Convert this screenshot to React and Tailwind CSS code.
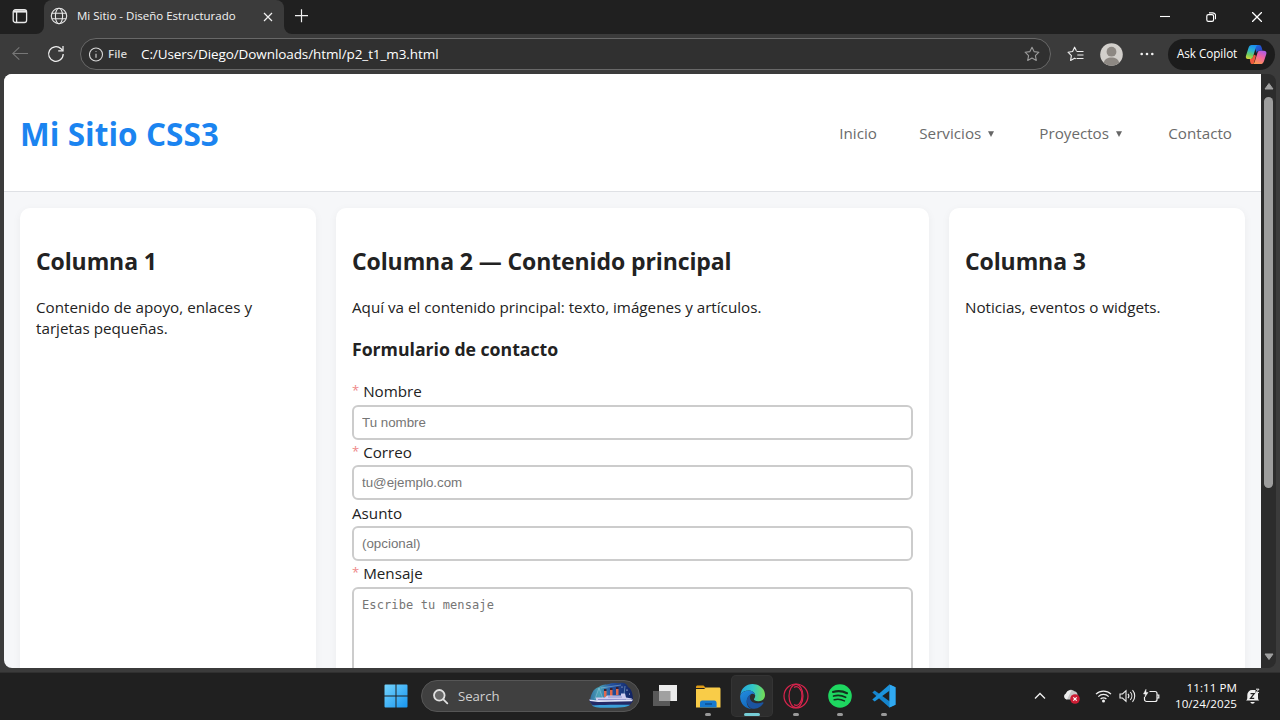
import React from "react";

const UI = "font-['Open_Sans','Noto_Sans',sans-serif]";

function Svg({ w, h, vb, className = "", children, ...rest }) {
  return (
    <svg width={w} height={h} viewBox={vb || `0 0 ${w} ${h}`} fill="none" className={`block shrink-0 ${className}`} {...rest}>
      {children}
    </svg>
  );
}

function TabStrip() {
  return (
    <div className="flex h-[34px] bg-[#202020] text-[#f2f2f2]">
      <div className="w-[44px] pt-2 pl-3">
        <Svg w={16} h={16} stroke="#e8e8e8" strokeWidth="1.3">
          <rect x="1.2" y="1.7" width="13.4" height="12.8" rx="2.3" />
          <path d="M1.5 3.4h12.800" strokeWidth="2.4" />
          <path d="M4.600 4v10" />
        </Svg>
      </div>
      <div className="relative flex h-[34px] w-[240px] items-center rounded-t-lg bg-[#3b3b3b]">
        <Svg w={8} h={8} className="absolute bottom-0 -left-2"><path d="M8 0v8H0a8 8 0 0 0 8-8Z" fill="#3b3b3b" /></Svg>
        <Svg w={8} h={8} className="absolute -right-2 bottom-0"><path d="M0 0v8h8a8 8 0 0 1-8-8Z" fill="#3b3b3b" /></Svg>
        <Svg w={18} h={18} className="mb-0.5 ml-[6px]" stroke="#e6e6e6" strokeWidth="1.1">
          <circle cx="9" cy="9" r="7.7" />
          <ellipse cx="9" cy="9" rx="3.6" ry="7.7" />
          <path d="M2 6.2h14M2 11.8h14" />
        </Svg>
        <span className="ml-[9px] w-[180px] pb-[2px] text-[11.5px] leading-4 whitespace-nowrap">Mi Sitio - Diseño Estructurado</span>
        <Svg w={10} h={10} className="mb-px ml-[6px]" stroke="#f0f0f0" strokeWidth="1.2"><path d="m1 1 8 8M9 1 1 9" /></Svg>
      </div>
      <Svg w={16} h={16} className="mt-2 ml-[9px]" stroke="#f0f0f0" strokeWidth="1.2"><path d="M8.5 1.2v13M2 7.7h13" /></Svg>
      <div className="ml-auto flex h-[34px] items-center gap-9 pr-[18px]">
        <Svg w={10} h={10} stroke="#fff" strokeWidth="1.1"><path d="M0 4.5h10" /></Svg>
        <Svg w={10} h={10} stroke="#fff" strokeWidth="1.2">
          <rect x=".8" y="2.6" width="6.8" height="6.8" rx="1.6" />
          <path d="M3 .8h3.600a3 3 0 0 1 3 3v3.400" />
        </Svg>
        <Svg w={10} h={10} stroke="#fff" strokeWidth="1.3"><path d="m0 0 10 10M10 0 0 10" /></Svg>
      </div>
    </div>
  );
}

const STAR = "m8 1.2 2.1 4.4 4.8.6-3.5 3.4.9 4.8L8 12.1l-4.3 2.3.9-4.8L1.1 6.2l4.8-.6Z";

function Toolbar() {
  return (
    <div className="flex h-10 items-center bg-[#3b3b3b] text-white">
      <Svg w={16} h={16} className="ml-3" stroke="#777" strokeWidth="1.1"><path d="M16 7.500H.8M7.300 1.300.7 7.500l6.600 6.200" /></Svg>
      <Svg w={18} h={18} className="ml-[19px]" stroke="#f0f0f0" strokeWidth="1.25">
        <path d="M16.200 9A7.300 7.300 0 1 1 14 3.800l1.600 1.600" />
        <path d="M16 1v4.800h-4.800" />
      </Svg>
      <div className="ml-[15px] flex h-8 w-[971px] items-center rounded-full border border-[#686868] bg-[#303030] pr-[10px] pl-2">
        <Svg w={15} h={15} stroke="#d8d8d8" strokeWidth="1.1">
          <circle cx="7" cy="7.500" r="6.500" />
          <path d="M7 6.700v4" />
          <circle cx="7" cy="4.600" r=".5" fill="#d8d8d8" stroke="none" />
        </Svg>
        <span className="ml-1 w-[33px] text-[11.500px] font-semibold text-[#d6d6d6]">File</span>
        <span className="text-[13.500px] tracking-[-0.090px] whitespace-nowrap">C:/Users/Diego/Downloads/html/p2_t1_m3.html</span>
        <Svg w={16} h={16} className="ml-auto" stroke="#9b9b9b" strokeWidth="1.1"><path d={STAR} strokeLinejoin="round" /></Svg>
      </div>
      <Svg w={18} h={16} className="ml-4" stroke="#eee" strokeWidth="1.150" strokeLinejoin="round">
        <path d="M9.400 4.800 7.600 1.200 5.600 5.500l-4.600.7 3.400 3.400-.8 4.800 4-2.200 1.200.6M9.500 5.500h7M10.300 9h6.200M9.500 12.500h7" />
      </Svg>
      <Svg w={23} h={23} className="ml-[15px]">
        <circle cx="11.500" cy="11.500" r="11.300" fill="#d2cfcb" />
        <circle cx="11.500" cy="8.700" r="4.900" fill="#8d8883" />
        <path d="M3.800 19.800c.8-4 3.800-5.400 7.700-5.400s6.900 1.400 7.700 5.400a11.300 11.300 0 0 1-15.400 0Z" fill="#8d8883" />
      </Svg>
      <Svg w={14} h={4} className="ml-[17px]"><g fill="#f2f2f2"><circle cx="1.700" cy="2" r="1.300" /><circle cx="7" cy="2" r="1.300" /><circle cx="12.300" cy="2" r="1.300" /></g></Svg>
      <div className="ml-[14px] flex h-[31px] w-[107px] items-center rounded-full bg-[#1c1c1c] pl-[9px]">
        <span className="w-[68px] text-[11.700px] tracking-[-0.050px] whitespace-nowrap">Ask Copilot</span>
        <CopilotIcon />
      </div>
    </div>
  );
}

function CopilotIcon() {
  return (
    <Svg w={23} h={21} vb="0 0 24 22">
      <defs>
        <linearGradient id="cpA" x1="8" y1="1" x2="3" y2="17" gradientUnits="userSpaceOnUse">
          <stop stopColor="#1b8df0" /><stop offset=".35" stopColor="#2cb5d2" /><stop offset=".65" stopColor="#6fce62" /><stop offset="1" stopColor="#f6d52b" />
        </linearGradient>
        <linearGradient id="cpB" x1="19" y1="6" x2="12" y2="21" gradientUnits="userSpaceOnUse">
          <stop stopColor="#a35bf0" /><stop offset=".45" stopColor="#ef62a4" /><stop offset="1" stopColor="#ff9a4c" />
        </linearGradient>
        <linearGradient id="cpC" x1="10" y1="1" x2="17" y2="8" gradientUnits="userSpaceOnUse">
          <stop stopColor="#1b6fe0" /><stop offset="1" stopColor="#2a43c5" />
        </linearGradient>
      </defs>
      <path d="M9.500 1h5c2 0 2.500 1.300 3 3l.9 3H15c-1.800 0-2.400.9-2.900 2.400L11 6Z" fill="url(#cpC)" />
      <path d="M7 1h6.500c-1.500.5-2 1.800-2.500 3.500L8.300 13.600c-.5 1.400-1.300 2.200-2.800 2.200H3c-2 0-2.600-1.500-2-3.400l2.500-8C4.200 2.200 5.300 1 7 1Z" fill="url(#cpA)" />
      <path d="M5 15.800c2 0 2.800-.8 3.300-2.200l.8-2.600 2.300 1.400-1.700 6.200c-.3 1.500-1 2.400-2.400 2.400-1.300 0-1.900-1-2.300-5.200Z" fill="#f0573c" />
      <path d="M15.600 7h4c2.300 0 3.300 1.500 2.700 3.600l-2.500 7.400c-.7 2-1.900 3-3.700 3H7.500c1.500-.3 2.300-1.300 2.700-2.700l2.800-9C13.400 7.900 14.200 7 15.600 7Z" fill="url(#cpB)" />
    </Svg>
  );
}

function Field({ label, required, placeholder }) {
  return (
    <div className="h-[60.670px]">
      <Label text={label} required={required} />
      <input placeholder={placeholder} className="block h-[35px] w-full rounded-[6px] border-2 border-[#ccc] bg-white px-2 font-['Liberation_Sans',sans-serif] text-[13.333px] placeholder:text-[#757575]" />
    </div>
  );
}

function Label({ text, required }) {
  return (
    <label className="flex h-[25.500px] items-start text-[15.200px] leading-[24px]">
      {required && <span className="mr-1 -mt-px text-[13px] text-[#ee8888]">*</span>}
      <span>{text}</span>
    </label>
  );
}

function Column({ title, className, children }) {
  return (
    <section className={`h-[600px] shrink-0 rounded-[10px] bg-white px-4 pt-9 shadow-[0_2px_8px_rgba(0,0,0,0.05)] ${className}`}>
      <h2 className="mb-[21px] h-8 text-[23px] leading-[34px] font-bold tracking-[-0.100px] whitespace-nowrap">{title}</h2>
      {children}
    </section>
  );
}

function Page() {
  return (
    <div className="h-[594px] w-[1257px] overflow-hidden rounded-l-lg bg-[#f6f7f9] text-[#222]">
      <header className="flex h-[118px] items-center justify-between border-b border-[#dfe1e5] bg-white pt-[2px] pr-[29px] pl-4">
        <h1 className="text-[31.500px] leading-10 font-bold tracking-[0.050px] text-[#1b84f0]">Mi Sitio CSS3</h1>
        <nav className="flex items-center text-[15.200px] text-[#6b6b6b]">
          <a className="w-[80px]">Inicio</a>
          <a className="flex w-[120px] items-center">Servicios<Caret /></a>
          <a className="flex w-[129px] items-center">Proyectos<Caret /></a>
          <a>Contacto</a>
        </nav>
      </header>
      <main className="flex gap-5 px-4 pt-4">
        <Column title="Columna 1" className="w-[296px]">
          <p className="text-[15.200px] leading-[21.330px] tracking-[0.020px]">Contenido de apoyo, enlaces y<br />tarjetas pequeñas.</p>
        </Column>
        <Column title="Columna 2 — Contenido principal" className="w-[593px]">
          <p className="text-[15.200px] leading-[21.330px] whitespace-nowrap">Aquí va el contenido principal: texto, imágenes y artículos.</p>
          <h3 className="mt-[19px] mb-[18px] h-6 text-[17.700px] leading-6 font-bold tracking-[-0.030px]">Formulario de contacto</h3>
          <form>
            <Field label="Nombre" required placeholder="Tu nombre" />
            <Field label="Correo" required placeholder="tu@ejemplo.com" />
            <Field label="Asunto" placeholder="(opcional)" />
            <Label text="Mensaje" required />
            <textarea placeholder="Escribe tu mensaje" className="block h-[120px] w-full resize-none rounded-[6px] border-2 border-[#ccc] bg-white px-2 pt-[9px] font-['DejaVu_Sans_Mono',monospace] text-[12px] leading-[15px] tracking-[0.110px] placeholder:text-[#757575]" />
          </form>
        </Column>
        <Column title="Columna 3" className="w-[296px]">
          <p className="text-[15.200px] leading-[21.330px]">Noticias, eventos o widgets.</p>
        </Column>
      </main>
    </div>
  );
}

function Caret() {
  return <Svg w={6} h={6} className="mt-px ml-[7px]"><path d="M0 .3h6L3 6Z" fill="#666" /></Svg>;
}

function Scrollbar() {
  return (
    <div className="flex h-[594px] w-[15px] flex-col items-center rounded-r-lg bg-[#2c2c2c] pt-2">
      <Svg w={10} h={8}><path d="M5 1.500 9 7H1Z" fill="#a0a0a0" stroke="#a0a0a0" strokeLinejoin="round" /></Svg>
      <div className="mt-[7px] h-[391px] w-[9px] rounded-full bg-[#9d9d9d]" />
      <Svg w={10} h={8} className="mt-auto mb-[7px]"><path d="M5 6.500 9 1H1Z" fill="#a0a0a0" stroke="#a0a0a0" strokeLinejoin="round" /></Svg>
    </div>
  );
}

function TaskButton({ children, state }) {
  return (
    <div className={`relative flex h-10 w-10 items-center justify-center rounded ${state === "active" ? "bg-[#2d2d2d] ring-1 ring-[#343434]" : ""}`}>
      {children}
      {state && <span className={`absolute bottom-0 h-[3px] rounded-full ${state === "active" ? "w-4 bg-[#76cdd6]" : "w-[6px] bg-[#999]"}`} />}
    </div>
  );
}

function ShipArt() {
  return (
    <Svg w={48} h={28}>
      <defs>
        <linearGradient id="night" x1="0" y1="0" x2="48" y2="0" gradientUnits="userSpaceOnUse"><stop stopColor="#2c5f9c" /><stop offset=".25" stopColor="#4ba5b8" /><stop offset=".5" stopColor="#2452a0" /><stop offset="1" stopColor="#101d5c" /></linearGradient>
      </defs>
      <path d="M3 20C3 14 6 6 12 5c3-3 7-2 10-3 4-2 8 0 11-1 4-1 7 1 8 4 4 2 5 8 5 14l-4 5H6Z" fill="url(#night)" />
      <path d="m8 17 4-11 4 11M37 13l1-9M14 6l20-3" stroke="#9cc9df" strokeWidth=".5" />
      <path d="M17 9h2.500v6H17zM23 8h2.500v6H23zM29 7h2.500v6H29z" fill="#e0684c" />
      <path d="M17 7h2.500v2H17zM23 6h2.500v2H23zM29 5h2.500v2H29z" fill="#3a2030" />
      <path d="M9 15.500h9l2-2h14v-2h4l1 4 6 1-2 3H9Z" fill="#cfcdf0" />
      <path d="M11 17.500h28M21 15h14" stroke="#7d82c4" strokeWidth=".8" />
      <path d="m2 17.500 9 1.500 35-1.500c-1 3-3 5.500-5 6.500H7c-2-1-4-3.500-5-6.500Z" fill="#232a66" />
      <path d="m2 17.500 9 1 35-1-1 1.800-34 .8-8-1.200Z" fill="#e2e6f8" />
      <path d="M5 23.500c8-.7 28-.7 38-.7-2 2-6 3-19 3-12 0-16 0-19-2.300Z" fill="#3a9fd8" />
      <circle cx="40" cy="8" r=".6" fill="#fff" /><circle cx="42.500" cy="12" r=".5" fill="#fff" /><circle cx="35" cy="5" r=".5" fill="#fff" />
    </Svg>
  );
}

function Taskbar() {
  return (
    <div className="flex h-[48px] items-center justify-between border-t border-[#303030] bg-[#202020] text-white">
      <div className="flex h-[47px] items-center pb-px pl-[384px]">
        <Svg w={24} h={24}>
          <defs><linearGradient id="win" x1="0" y1="0" x2="24" y2="24" gradientUnits="userSpaceOnUse"><stop stopColor="#76d5fd" /><stop offset="1" stopColor="#1594f0" /></linearGradient></defs>
          <path d="M1.500.5h10v11H.5v-10a1 1 0 0 1 1-1ZM12.500.5h10a1 1 0 0 1 1 1v10h-11ZM.5 12.500h11v11h-10a1 1 0 0 1-1-1ZM12.500 12.500h11v10a1 1 0 0 1-1 1h-10Z" fill="url(#win)" />
        </Svg>
        <div className="ml-[13px] flex h-8 w-[219px] items-center rounded-full border border-[#565656] bg-[#404040] pr-[4px] pl-[10px]">
          <Svg w={17} h={17} stroke="#e0e0e0" strokeWidth="1.800" strokeLinecap="round"><circle cx="7.300" cy="7.300" r="5.300" fill="#686868" /><path d="m11.300 11.300 4 4" /></Svg>
          <span className="ml-[9px] pt-px text-[13.200px] tracking-[-0.050px] text-[#d0d0d0]">Search</span>
          <div className="ml-auto"><ShipArt /></div>
        </div>
        <div className="ml-1 flex gap-1">
          <TaskButton>
            <Svg w={24} h={24} className="ml-px"><path d="M0 7h17v15H0z" fill="#595959" /><path d="M6 1h18v16H6z" fill="#ececec" /><path d="M6 7h11.500v10H6z" fill="#a1a1a1" /></Svg>
          </TaskButton>
          <TaskButton state="open">
            <Svg w={25} h={23}>
              <path d="M0 2C0 1 .7.5 1.500.5h6L10 3H0Z" fill="#df9b16" />
              <path d="M0 4h8l2-1.500h13c1 0 1.500.6 1.500 1.500v18.500H0Z" fill="#f9cc48" />
              <path d="M4 22.500V18c0-1.500.8-2.500 2.300-2.500h12c1.500 0 2.300 1 2.300 2.500v4.500Z" fill="#1679cf" />
              <path d="M9 19h7" stroke="#0d4e91" strokeWidth="1.500" />
            </Svg>
          </TaskButton>
          <TaskButton state="active">
            <Svg w={25} h={25} vb="0 0 24 24">
              <defs>
                <linearGradient id="eA" x1="1" y1="7" x2="23" y2="9" gradientUnits="userSpaceOnUse"><stop stopColor="#26a7dc" /><stop offset=".5" stopColor="#31c6c8" /><stop offset="1" stopColor="#70dc5b" /></linearGradient>
                <linearGradient id="eB" x1="2" y1="8" x2="10" y2="23" gradientUnits="userSpaceOnUse"><stop stopColor="#2089dc" /><stop offset="1" stopColor="#1265b8" /></linearGradient>
              </defs>
              <path d="M.4 10.300C1.200 4.200 6 0 12 0c7 0 12 5 12 10.500 0 3.600-2.700 6-6.300 6-3 0-4.300-1-4.300-1.800 0-.7 1.200-1.300 1.200-3.400 0-2.800-2.700-5-6.300-5C5 6.300 2 7.500.4 10.300Z" fill="url(#eA)" />
              <path d="M8.500 6.300C4.500 6.300.2 8.500.1 12c0 7 5 12 11.500 12-3.500-1-5.500-4.500-5.100-8 .4-3 2-4.800 4.400-6.300 1.400-.8 3.500 0 3.700 1.600C14.300 8.200 11.500 6.300 8.500 6.300Z" fill="url(#eB)" />
              <path d="M10.900 9.700c-2.300.8-4.400 3.400-4.400 6.300 0 4.300 3.400 8 7.500 7.800 3.700-.4 6.900-2.600 8.500-5.400.4-.7-.3-1-.8-.8-5 2.200-12.100.5-12.200-5 0-1.100.5-2.100 1.400-2.900Z" fill="#1b54a0" />
            </Svg>
          </TaskButton>
          <TaskButton state="open">
            <Svg w={26} h={26} stroke="#d9244d" strokeWidth="1.200"><circle cx="13" cy="13" r="12" /><ellipse cx="13" cy="13" rx="7" ry="11.700" /><path d="M11 4.500c3.500-2.500 8 1.500 8 8.500s-4.500 11-8 8.500" /></Svg>
          </TaskButton>
          <TaskButton state="open">
            <Svg w={24} h={24} stroke="#14301d" strokeLinecap="round">
              <circle cx="12" cy="12" r="11.800" fill="#1ed760" stroke="none" />
              <path d="M5 8c4.500-1.400 9.800-1 14 1.200" strokeWidth="2.100" /><path d="M5.600 12c4-1.200 8.300-.7 12 1.200" strokeWidth="1.800" /><path d="M6.200 15.700c3.500-.9 7-.5 10.200 1.200" strokeWidth="1.500" />
            </Svg>
          </TaskButton>
          <TaskButton state="open">
            <Svg w={24} h={24}>
              <path d="m17.500.5 6 2.700v17.600l-6 2.700L.3 8.500l2.400-2 14.800 10.800Z" fill="#1584cc" />
              <path d="M17.500 6.700 2.700 17.500.3 15.500 17.500.5Z" fill="#1b93dc" />
              <path d="m17.500.5 6 2.700v17.600l-6 2.700Z" fill="#30a9f1" />
            </Svg>
          </TaskButton>
        </div>
      </div>
      <div className="flex h-[47px] items-center pr-[19px] pb-px">
        <Svg w={12} h={8} stroke="#f0f0f0" strokeWidth="1.300"><path d="m1 6.500 5-5 5 5" /></Svg>
        <Svg w={17} h={16} className="ml-[17px]">
          <path d="M3.500 11.500A3.200 3.200 0 0 1 3 5.500a5 5 0 0 1 8.500-2.200 4 4 0 0 1 3 4.200v4Z" fill="#c9c9c9" />
          <path d="M3 5.500a5 5 0 0 1 5.500-3L4 11.500A3.200 3.200 0 0 1 3 5.500Z" fill="#eee" />
          <circle cx="12" cy="11" r="4.800" fill="#cc1e35" /><path d="m10.300 9.300 3.400 3.400M13.700 9.300l-3.400 3.400" stroke="#fff" strokeWidth="1.200" />
        </Svg>
        <Svg w={17} h={14} className="ml-[15px]" stroke="#f0f0f0" strokeWidth="1.200">
          <path d="M1 5.200a10.600 10.600 0 0 1 15 0M3.300 7.600a7.300 7.300 0 0 1 10.400 0M5.600 10a4.100 4.100 0 0 1 5.800 0" /><circle cx="8.500" cy="11.900" r="1.500" fill="#f0f0f0" stroke="none" />
        </Svg>
        <Svg w={17} h={14} className="ml-[7px]" stroke="#f0f0f0" strokeWidth="1.100">
          <path d="M1 5h2.500L7 1.700v10.600L3.500 9H1ZM9 4.800a3.500 3.500 0 0 1 0 4.400M11.300 3a6 6 0 0 1 0 8M13.500 1.200a8.700 8.700 0 0 1 0 11.600" />
        </Svg>
        <Svg w={18} h={14} className="ml-[6px]" stroke="#f0f0f0" strokeWidth="1.200">
          <path d="M7.500 2.500H13a2 2 0 0 1 2 2v6a2 2 0 0 1-2 2H4.500a2 2 0 0 1-2-2V8M15.300 6h1.500v3h-1.500" /><path d="M4 .3 1.500 5h2L3 8l3-4.500H4Z" fill="#f0f0f0" strokeWidth=".5" />
        </Svg>
        <div className="ml-[9px] w-[68px] text-right text-[11.600px] leading-4 tracking-[0.050px] whitespace-nowrap"><div>11:11 PM</div><div>10/24/2025</div></div>
        <Svg w={16} h={17} className="ml-2" strokeWidth="1">
          <path d="M1 12.500c1-.8 1.300-1.500 1.300-3V7a4.800 4.800 0 0 1 5-5h3.200v3h2.500v4.500c0 1.500.3 2.200 1.300 3ZM5.300 14h4.500a2.300 2.300 0 0 1-4.500 0Z" fill="#f0f0f0" />
          <path d="M5.500 5.700h3.700l-3.700 4.600h3.700" stroke="#202020" strokeWidth="1.200" /><path d="M11 1.200h3l-3 3.400h3" stroke="#f0f0f0" />
        </Svg>
      </div>
    </div>
  );
}

export default function App() {
  return (
    <div className={`flex h-[720px] w-[1280px] flex-col overflow-hidden bg-[#3b3b3b] ${UI}`}>
      <TabStrip />
      <Toolbar />
      <div className="flex h-[598px] pl-1">
        <Page />
        <Scrollbar />
      </div>
      <Taskbar />
    </div>
  );
}
